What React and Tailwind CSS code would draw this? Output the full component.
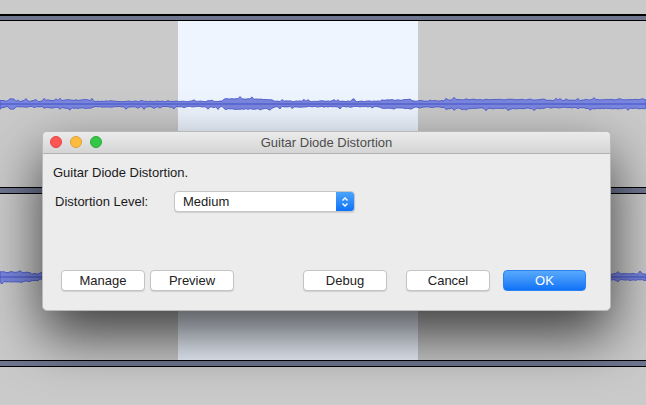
import React from 'react';

// deterministic noise so the waveform is the same on every render
function makeRand(seed) {
  let s = seed;
  return () => {
    s = (s * 16807) % 2147483647;
    return (s - 1) / 2147483646;
  };
}

function wavePath(seed, width, mid) {
  const rand = makeRand(seed);
  const top = [];
  const bot = [];
  let base = 3;
  for (let x = 0; x <= width; x += 2) {
    if (rand() < 0.08) base = 2 + rand() * 2.5;
    const spike = rand() < 0.12 ? rand() * 2.5 : 0;
    top.push([x, mid - base - spike - rand()]);
    bot.push([x, mid + base + (rand() < 0.12 ? rand() * 2.5 : 0) + rand()]);
  }
  const pts = [...top, ...bot.reverse()];
  return 'M' + pts.map(([x, y]) => `${x} ${y.toFixed(1)}`).join(' L') + ' Z';
}

function Separator() {
  return (
    <div className="flex flex-col">
      <div className="h-px bg-black" />
      <div className="h-[5px] bg-[#6e7690]" />
      <div className="h-px bg-black" />
    </div>
  );
}

function Track({ seed }) {
  return (
    <div className="relative h-[166px] flex">
      <div className="w-[178px] bg-[#cacaca]" />
      <div className="w-[240px] bg-[#eef5ff]" />
      <div className="flex-1 bg-[#cacaca]" />
      <svg className="absolute inset-0" width="646" height="166">
        <path d={wavePath(seed, 646, 83)} fill="#7b86de" stroke="#4152cc" strokeWidth="0.8" />
        <line x1="0" y1="83" x2="646" y2="83" stroke="#4152cc" strokeWidth="1" />
      </svg>
    </div>
  );
}

function Btn({ children, className = '' }) {
  return (
    <button
      className={
        'h-[21px] w-[84px] rounded-[4px] bg-white border border-[#c4c4c4] shadow-[0_1px_1px_rgba(0,0,0,0.12)] text-[13px] text-[#222] leading-none ' +
        className
      }
    >
      {children}
    </button>
  );
}

export default function App() {
  return (
    <div className="relative w-[646px] h-[405px] overflow-hidden bg-[#cacaca]" style={{ fontFamily: '"Liberation Sans", Arial, sans-serif' }}>
      <div className="h-[14px]" />
      <div className="flex flex-col">
        <div className="h-[2px] bg-black" />
        <div className="h-[4px] bg-[#6e7690]" />
        <div className="h-px bg-black" />
      </div>
      <Track seed={17} />
      <Separator />
      <Track seed={91} />
      <Separator />

      <div className="absolute left-[42px] top-[131px] w-[569px] h-[180px] rounded-[5px] bg-[#ececec] border border-[#b9b9b9] shadow-[0_24px_55px_rgba(0,0,0,0.7)] flex flex-col overflow-hidden">
        <div className="relative h-[22px] flex items-center justify-center bg-gradient-to-b from-[#ebebeb] to-[#d5d5d5] border-b border-[#b1b1b1]">
          <div className="absolute left-[7px] top-[4px] flex gap-[8px]">
            <div className="w-[12px] h-[12px] rounded-full bg-[#fc5753] border border-[#df4744]" />
            <div className="w-[12px] h-[12px] rounded-full bg-[#fdbc40] border border-[#de9f34]" />
            <div className="w-[12px] h-[12px] rounded-full bg-[#33c748] border border-[#27aa35]" />
          </div>
          <span className="text-[13px] text-[#4d4d4d]">Guitar Diode Distortion</span>
        </div>
        <div className="flex flex-col px-[10px] pt-[11px] flex-1">
          <div className="text-[13px] text-[#1a1a1a] leading-[16px]">Guitar Diode Distortion.</div>
          <div className="flex items-center mt-[10px]">
            <span className="w-[121px] pl-[2px] text-[13px] text-[#1a1a1a]">Distortion Level:</span>
            <div className="flex h-[21px] w-[181px] rounded-[4px] bg-white border border-[#c6c6c6] shadow-[0_1px_1px_rgba(0,0,0,0.12)] overflow-hidden">
              <span className="flex-1 pl-[8px] text-[13px] text-[#1a1a1a] leading-[19px]">Medium</span>
              <div className="w-[18px] flex items-center justify-center bg-gradient-to-b from-[#4aa4fc] to-[#0c72f6]">
                <svg width="8" height="12" viewBox="0 0 8 12" fill="none" stroke="white" strokeWidth="1.4">
                  <path d="M1.5 4.5 L4 2 L6.5 4.5" />
                  <path d="M1.5 7.5 L4 10 L6.5 7.5" />
                </svg>
              </div>
            </div>
          </div>
          <div className="flex-1" />
          <div className="flex items-center pb-[19px] pl-[8px] pr-[14px]">
            <Btn>Manage</Btn>
            <Btn className="ml-[5px] w-[83px]">Preview</Btn>
            <div className="flex-1" />
            <Btn className="w-[83px]">Debug</Btn>
            <Btn className="ml-[19px] w-[83px]">Cancel</Btn>
            <button className="ml-[13px] h-[21px] w-[83px] rounded-[4px] bg-gradient-to-b from-[#58a9fb] to-[#0b72f7] border border-[#2a82f2] text-[13px] text-white leading-none">
              OK
            </button>
          </div>
        </div>
      </div>
    </div>
  );
}
